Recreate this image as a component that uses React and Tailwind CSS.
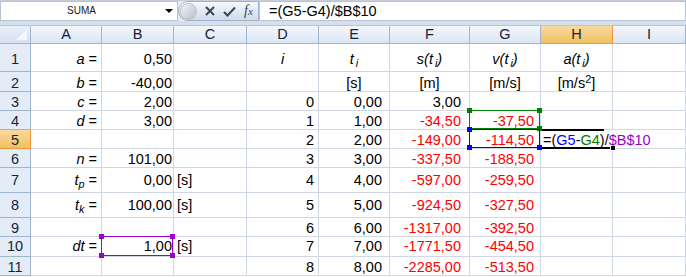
const font = "font-['Liberation_Sans',Arial,sans-serif]";

const colW = ["w-[71px]", "w-[72px]", "w-[73px]", "w-[72px]", "w-[71px]", "w-[80px]", "w-[71px]", "w-[72px]", "flex-1"];
const letters = ["A", "B", "C", "D", "E", "F", "G", "H", "I"];

const sData = ["3,00", "-34,50", "-149,00", "-337,50", "-597,00", "-924,50", "-1317,00", "-1771,50", "-2285,00"];
const vData = ["", "-37,50", "-114,50", "-188,50", "-259,50", "-327,50", "-392,50", "-454,50", "-513,50"];

function Handle({ color, pos }) {
  return <span className={`absolute h-[5px] w-[5px] ${color} ${pos}`} />;
}

function RangeBox({ border, fill, corners }) {
  const pos = {
    tl: "-left-[3px] -top-[3px]",
    tr: "-right-[3px] -top-[3px]",
    bl: "-left-[3px] -bottom-[3px]",
    br: "-right-[3px] -bottom-[3px]",
  };
  return (
    <div className={`pointer-events-none absolute -left-px -top-px right-0 bottom-0 z-20 border ${border}`}>
      {corners.map((c) => (
        <Handle key={c} color={fill} pos={pos[c]} />
      ))}
    </div>
  );
}

function Cell({ i, align = "right", pad = "", className = "", children }) {
  const justify = align === "right" ? "justify-end" : align === "center" ? "justify-center" : "justify-start";
  return (
    <div
      className={`relative flex shrink-0 items-end whitespace-nowrap border-r border-b border-[#d0d7e5] ${colW[i]} ${justify} ${pad} ${className}`}
    >
      {children}
    </div>
  );
}

function Row({ n, h, pb, active, cells }) {
  return (
    <div className={`flex ${h}`}>
      <div
        className={`flex w-[31px] shrink-0 items-end justify-center border-r border-b ${pb} ${
          active ? "border-[#f29536] bg-linear-to-b from-[#f9d99f] to-[#f1c15f]" : "border-[#9eb6ce] bg-[#e4ecf7]"
        } text-[#15233a]`}
      >
        {n}
      </div>
      {cells.map((c, i) => (
        <Cell key={i} i={i} align={c.align} pad={`${pb} ${c.pad || ""}`} className={c.className}>
          {c.content}
        </Cell>
      ))}
    </div>
  );
}

const padR = ["pr-[4px]", "pr-[1px]", "pl-[3px]", "pr-[4px]", "pr-[7px]", "pr-[8px]", "pr-[6px]", "", ""];

function Label({ v, sub }) {
  return (
    <span>
      <i>{v}</i>
      {sub && <sub className="italic">{sub}</sub>}
      {sub ? "\u00a0=" : " ="}
    </span>
  );
}

function Fn({ f }) {
  return (
    <i>
      {f}(t<sub className="pl-[2px]">i</sub>)
    </i>
  );
}

export default function App() {
  const empty = (i) => ({ content: null, align: "right", pad: padR[i] });
  const rows = [];

  const base = () => Array.from({ length: 9 }, (_, i) => empty(i));

  // row 1
  let r = base();
  r[0] = { content: <Label v="a" />, pad: padR[0] };
  r[1] = { content: "0,50", pad: padR[1] };
  r[3] = { content: <i>i</i>, align: "center" };
  r[4] = { content: <i>t<sub className="pl-[2px]">i</sub></i>, align: "center" };
  r[5] = { content: <Fn f="s" />, align: "center" };
  r[6] = { content: <Fn f="v" />, align: "center" };
  r[7] = { content: <Fn f="a" />, align: "center" };
  rows.push({ n: 1, h: "h-[28px]", pb: "pb-[4px]", cells: r });

  // row 2
  r = base();
  r[0] = { content: <Label v="b" />, pad: padR[0] };
  r[1] = { content: "-40,00", pad: padR[1] };
  r[4] = { content: "[s]", align: "center" };
  r[5] = { content: "[m]", align: "center" };
  r[6] = { content: "[m/s]", align: "center" };
  r[7] = { content: <span>[m/s<sup>2</sup>]</span>, align: "center" };
  rows.push({ n: 2, h: "h-[20px]", pb: "pb-0", cells: r });

  const left = {
    3: { a: <Label v="c" />, b: "2,00" },
    4: { a: <Label v="d" />, b: "3,00" },
    6: { a: <Label v="n" />, b: "101,00" },
    7: { a: <Label v="t" sub="p" />, b: "0,00", c: "[s]" },
    8: { a: <Label v="t" sub="k" />, b: "100,00", c: "[s]" },
    10: { a: <Label v="dt" />, b: "1,00", c: "[s]" },
  };
  const heights = { 3: 19, 4: 19, 5: 19, 6: 19, 7: 25, 8: 25, 9: 19, 10: 20, 11: 19 };
  const hCls = { 19: "h-[19px]", 20: "h-[20px]", 25: "h-[25px]" };
  const pbCls = { 19: "pb-0", 20: "pb-[2px]", 25: "pb-[4px]" };

  for (let n = 3; n <= 11; n++) {
    r = base();
    const k = n - 3;
    const L = left[n];
    if (L) {
      r[0] = { content: L.a, pad: padR[0] };
      r[1] = { content: L.b, pad: padR[1] };
      if (L.c) r[2] = { content: L.c, align: "left", pad: padR[2] };
    }
    r[3] = { content: String(k), pad: padR[3] };
    r[4] = { content: `${k},00`, pad: padR[4] };
    r[5] = { content: <span className={k === 0 ? "" : "text-[#ff0000]"}>{sData[k]}</span>, pad: padR[5] };
    r[6] = { content: <span className="text-[#ff0000]">{vData[k]}</span>, pad: padR[6] };
    if (n === 4) {
      r[6].content = (
        <>
          <RangeBox border="border-[#008000]" fill="bg-[#008000]" corners={["tl", "tr", "br"]} />
          <span className="text-[#ff0000]">{vData[k]}</span>
        </>
      );
    }
    if (n === 5) {
      r[6].content = (
        <>
          <RangeBox border="border-[#0000ff]" fill="bg-[#0000ff]" corners={["tl", "bl", "br"]} />
          <span className="text-[#ff0000]">{vData[k]}</span>
        </>
      );
      r[7] = {
        align: "left",
        pad: "pl-[2px]",
        className: "z-10 border-r-white",
        content: (
          <>
            <span className="absolute -top-px left-0 h-[2px] w-[63px] bg-black" />
            <span className="absolute -bottom-px left-0 h-[2px] w-[70px] bg-black" />
            <span className="absolute -bottom-[3px] -right-[4px] h-[6px] w-[6px] border border-white bg-black" />
            <span className="relative">
              =(<span className="text-[#0000ff]">G5</span>-<span className="text-[#008000]">G4</span>)/
              <span className="text-[#9900cc]">$B$10</span>
            </span>
          </>
        ),
      };
    }
    if (n === 10) {
      r[1].content = (
        <>
          <RangeBox border="border-[#9900cc]" fill="bg-[#9900cc]" corners={["tl", "tr", "bl", "br"]} />
          {L.b}
        </>
      );
    }
    rows.push({ n, h: hCls[heights[n]], pb: pbCls[heights[n]], active: n === 5, cells: r });
  }

  return (
    <div className={`h-[277px] w-[686px] overflow-hidden bg-white text-[14.5px] leading-[15px] text-black ${font}`}>
      {/* formula bar */}
      <div className="flex h-[21px] border-t border-[#c3ccd8] bg-[#e6ecf4]">
        <div className="relative flex w-[178px] shrink-0 items-center border border-[#b7c4d5] bg-white">
          <span className="ml-[66px] text-[10px] leading-none text-[#1a1a1a]">SUMA</span>
          <span className="absolute left-[164px] top-[7px] h-0 w-0 border-x-[4px] border-t-[4px] border-x-transparent border-t-black" />
        </div>
        <div className="flex w-[81px] shrink-0 items-center rounded-l-full border border-[#9fb3cc] bg-linear-to-b from-[#f5f8fc] to-[#cfdbeb]">
          <span className="ml-[1px] h-[17px] w-[17px] rounded-full border border-[#b6c0cc] bg-linear-to-br from-[#f4f4f4] to-[#b9c0c8]" />
          <svg width="10" height="10" viewBox="0 0 10 10" className="ml-[8px]">
            <path d="M1 1L9 9M9 1L1 9" stroke="#3a4654" strokeWidth="2" />
          </svg>
          <svg width="13" height="11" viewBox="0 0 13 11" className="ml-[8px]">
            <path d="M1 6L4.5 9.5L12 1.5" stroke="#3a4654" strokeWidth="2" fill="none" />
          </svg>
          <span className="ml-[8px] font-['Liberation_Serif',serif] text-[14px] italic leading-none text-[#3a4654]">
            f<span className="text-[11px]">x</span>
          </span>
        </div>
        <div className="flex flex-1 items-center border border-[#b7c4d5] bg-white pl-[9px]">
          <span>=(G5-G4)/$B$10</span>
        </div>
      </div>
      <div className="h-[5px] border-b border-[#b5c6da] bg-[#d6e0ec]" />

      {/* column headers */}
      <div className="flex h-[18px]">
        <div className="relative w-[31px] shrink-0 border-r border-b border-[#9eb6ce] bg-linear-to-b from-[#e9eff8] to-[#d4e0f0]">
          <span className="absolute bottom-[3px] right-[3px] h-0 w-0 border-b-[11px] border-l-[11px] border-b-[#f3f6fa] border-l-transparent" />
        </div>
        {letters.map((l, i) => (
          <div
            key={l}
            className={`flex shrink-0 items-center justify-center border-r border-b text-[#15233a] ${colW[i]} ${
              l === "H"
                ? "border-[#f29536] bg-linear-to-b from-[#f9d99f] to-[#f1c15f]"
                : "border-[#9eb6ce] bg-linear-to-b from-[#f3f7fc] to-[#dce6f3]"
            }`}
          >
            {l}
          </div>
        ))}
      </div>

      {rows.map((row) => (
        <Row key={row.n} {...row} />
      ))}
    </div>
  );
}
